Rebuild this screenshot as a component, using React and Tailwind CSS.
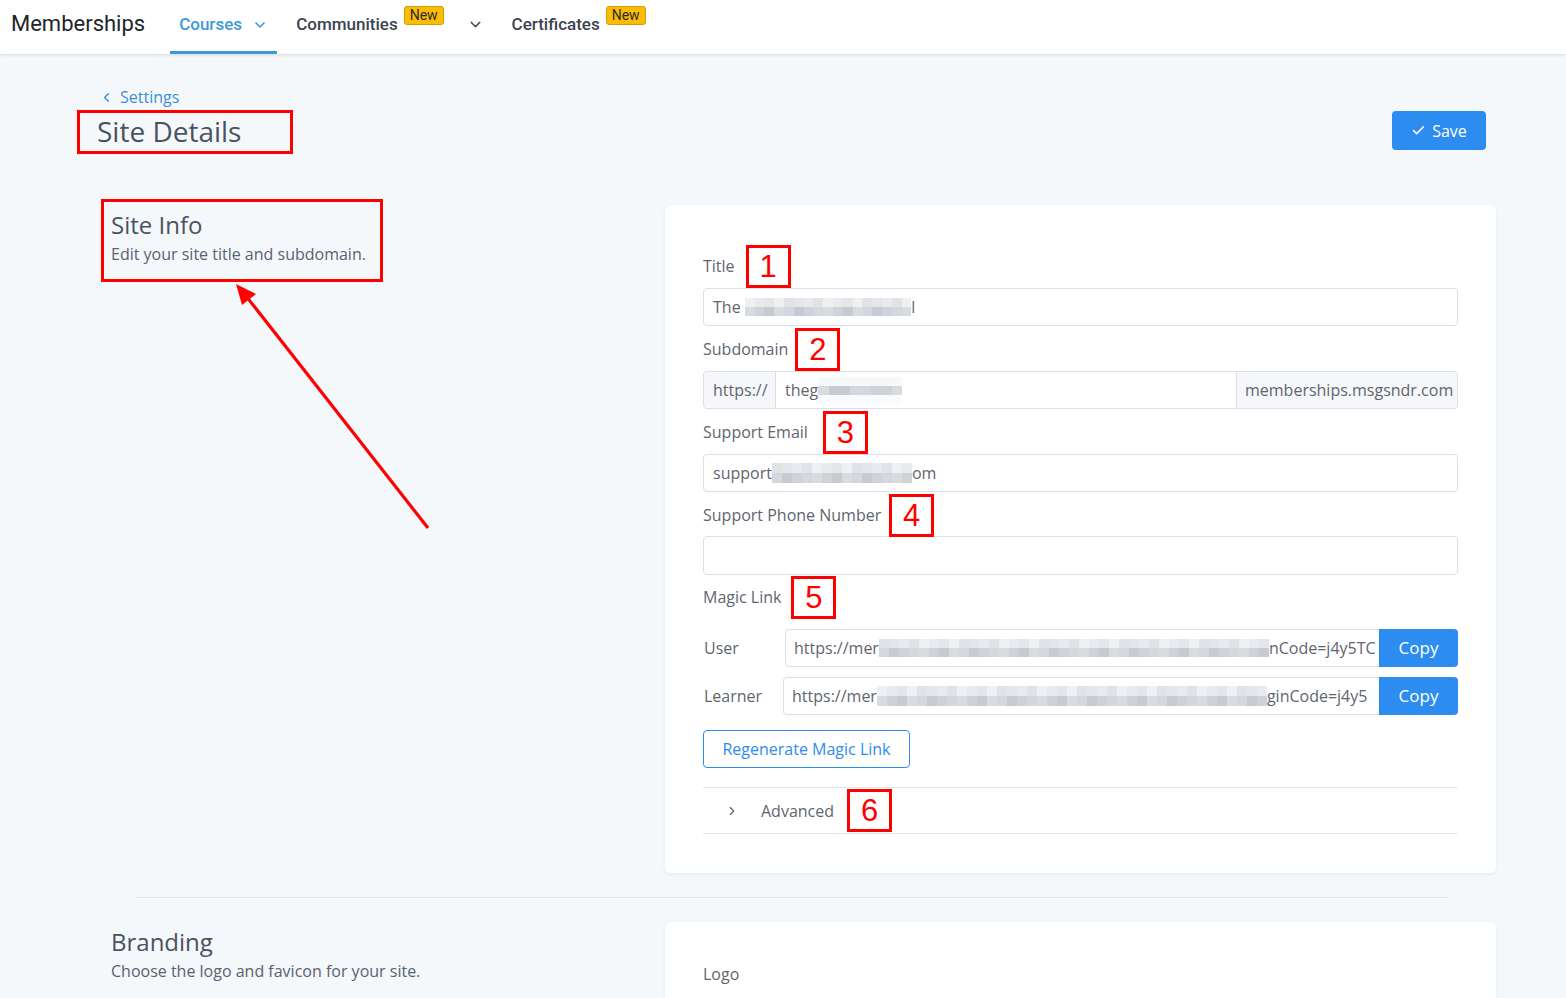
import React from "react";
import { ChevronDown, ChevronLeft, ChevronRight, Check } from "lucide-react";

const SHADES = ["#e0e2e6", "#cfd2d8", "#e8eaed", "#d8dbe0", "#eff0f2", "#c6cad1", "#e4e6e9", "#d4d7dd"];

function Mosaic({ cols, rows, seed = 0, cell = 10, rowH = 9, light = [] }) {
  const r = [];
  for (let i = 0; i < rows; i++) {
    const c = [];
    for (let j = 0; j < cols; j++) {
      const bg = light.includes(i)
        ? ["#f7f8fa", "#fafbfc", "#f4f5f7"][(i * 5 + j * 3 + seed) % 3]
        : SHADES[(i * 7 + j * 5 + seed * 3 + ((j * j + seed) % 4)) % SHADES.length];
      c.push(<div key={j} style={{ width: cell, height: rowH, background: bg }} />);
    }
    r.push(
      <div key={i} className="flex">
        {c}
      </div>
    );
  }
  return <span className="inline-flex shrink-0 flex-col align-middle">{r}</span>;
}

function NumBox({ n, className = "" }) {
  return (
    <span
      className={
        "flex h-[43px] w-[45px] shrink-0 items-center justify-center border-[3px] border-[#ff0000] bg-transparent font-['Liberation_Sans',sans-serif] text-[31px] leading-none text-[#ff0000] " +
        className
      }
    >
      {n}
    </span>
  );
}

function Label({ text, n, gap }) {
  return (
    <div className="flex h-[22px] items-center text-[16px] text-[#5f6570]">
      <span>{text}</span>
      <NumBox n={n} className={gap} />
    </div>
  );
}

function NewBadge() {
  return (
    <span className="relative -top-[9px] ml-[6px] rounded-[3px] border border-[#d39e00] bg-[#fcbc05] px-[5px] font-['Roboto',sans-serif] text-[14px] font-normal leading-[17px] text-[#2b2b2b]">
      New
    </span>
  );
}

export default function App() {
  return (
    <div className="relative min-h-[998px] w-full overflow-hidden bg-[#f5f8fb] font-['Open_Sans',sans-serif]">
      {/* Nav */}
      <nav className="flex h-[54px] items-stretch bg-white font-['Roboto',sans-serif] shadow-[0_1px_3px_rgba(0,0,0,0.12)]">
        <div className="flex items-center pb-[8px] pl-[11px] pr-[25px] text-[22px] text-[#212529]">Memberships</div>
        <div className="flex w-[107px] items-center border-b-[3px] border-[#3d9ad8] px-[9px] pb-[2px] text-[17px] font-medium text-[#3d9ad8]">
          <span>Courses</span>
          <ChevronDown className="ml-[10px] h-[16px] w-[16px]" strokeWidth={2.5} />
        </div>
        <div className="ml-[10px] flex items-center px-[9px] pb-[5px] text-[17px] font-medium text-[#3c4350]">
          <span>Communities</span>
          <NewBadge />
          <ChevronDown className="ml-[23px] h-[17px] w-[17px] text-[#4b5260]" strokeWidth={2} />
        </div>
        <div className="ml-[19px] flex items-center pb-[5px] text-[17px] font-medium text-[#3c4350]">
          <span>Certificates</span>
          <NewBadge />
        </div>
      </nav>

      {/* Page header */}
      <div className="flex items-start justify-between pl-[77px] pr-[80px] pt-[32px]">
        <div>
          <div className="flex h-[22px] items-center pl-[22px] text-[16px] text-[#3b8fd9]">
            <ChevronLeft className="mr-[6px] h-[15px] w-[15px]" strokeWidth={2.5} />
            <span>Settings</span>
          </div>
          <div className="mt-[2px] flex h-[44px] w-[216px] items-center border-[3px] border-[#ff0000] pb-[2px] pl-[17px] text-[28px] font-medium text-[#4a5262]">
            Site Details
          </div>
        </div>
        <button className="mt-[25px] flex h-[39px] w-[94px] items-center justify-center gap-[6px] rounded-[4px] bg-[#2d8cf0] text-[16px] text-white">
          <Check className="h-[15px] w-[15px]" strokeWidth={2.5} />
          Save
        </button>
      </div>

      {/* Site Info section */}
      <div className="mt-[51px] flex pl-[101px]">
        <div className="w-[564px] pt-0">
          <div className="-mt-[6px] h-[83px] w-[282px] border-[3px] border-[#ff0000] px-[7px] pt-[7px]">
            <div className="text-[24px] font-medium leading-[32px] text-[#4a5262]">Site Info</div>
            <div className="text-[16px] leading-[26px] text-[#5a6170]">Edit your site title and subdomain.</div>
          </div>
        </div>
        <div className="w-[831px] rounded-[6px] bg-white px-[38px] pb-[39px] pt-[50px] shadow-[0_1px_4px_rgba(0,0,0,0.06)]">
          <Label text="Title" n="1" gap="ml-[11px]" />
          <div className="mt-[11px] flex h-[38px] items-center overflow-hidden whitespace-nowrap rounded-[4px] border border-[#dcdfe6] px-[9px] text-[16px] text-[#5f6570]">
            <span>The&nbsp;</span>
            <Mosaic cols={17} rows={2} seed={1} cell={9.8} rowH={9} />
            <span>l</span>
          </div>

          <div className="mt-[12px]">
            <Label text="Subdomain" n="2" gap="ml-[7px]" />
          </div>
          <div className="mt-[11px] flex h-[38px] rounded-[4px] border border-[#dcdfe6] text-[16px] text-[#5f6570]">
            <div className="flex w-[72px] items-center rounded-l-[4px] border-r border-[#dcdfe6] bg-[#f5f7fa] px-[9px]">https://</div>
            <div className="flex flex-1 items-center overflow-hidden whitespace-nowrap px-[9px]">
              <span>theg</span>
              <Mosaic cols={8} rows={3} seed={3} cell={10.5} rowH={9} light={[0, 2]} />
            </div>
            <div className="flex w-[221px] items-center rounded-r-[4px] border-l border-[#dcdfe6] bg-[#f5f7fa] px-[8px]">
              memberships.msgsndr.com
            </div>
          </div>

          <div className="mt-[12px]">
            <Label text="Support Email" n="3" gap="ml-[15px]" />
          </div>
          <div className="mt-[11px] flex h-[38px] items-center whitespace-nowrap rounded-[4px] border border-[#dcdfe6] px-[9px] text-[16px] text-[#5f6570]">
            <span>support</span>
            <Mosaic cols={14} rows={2} seed={5} cell={10} rowH={10} />
            <span>om</span>
          </div>

          <div className="mt-[12px]">
            <Label text="Support Phone Number" n="4" gap="ml-[8px]" />
          </div>
          <div className="mt-[10px] h-[39px] rounded-[4px] border border-[#dcdfe6]" />

          <div className="mt-[11px]">
            <Label text="Magic Link" n="5" gap="ml-[10px]" />
          </div>

          <div className="mt-[21px] flex h-[38px] items-center text-[16px] text-[#5f6570]">
            <span className="w-[82px] pl-[1px]">User</span>
            <div className="flex h-full min-w-0 flex-1 items-center overflow-hidden whitespace-nowrap rounded-l-[4px] border border-r-0 border-[#dcdfe6] px-[8px]">
              <span>https://mer</span>
              <Mosaic cols={39} rows={2} seed={2} cell={10} rowH={9} />
              <span>nCode=j4y5TC</span>
            </div>
            <button className="h-full w-[79px] shrink-0 rounded-r-[4px] bg-[#2d8cf0] text-[17px] text-white">Copy</button>
          </div>
          <div className="mt-[10px] flex h-[38px] items-center text-[16px] text-[#5f6570]">
            <span className="w-[80px] pl-[1px]">Learner</span>
            <div className="flex h-full min-w-0 flex-1 items-center overflow-hidden whitespace-nowrap rounded-l-[4px] border border-r-0 border-[#dcdfe6] px-[8px]">
              <span>https://mer</span>
              <Mosaic cols={39} rows={2} seed={4} cell={10} rowH={10} />
              <span>ginCode=j4y5</span>
            </div>
            <button className="h-full w-[79px] shrink-0 rounded-r-[4px] bg-[#2d8cf0] text-[17px] text-white">Copy</button>
          </div>

          <button className="mt-[15px] h-[38px] w-[207px] rounded-[4px] border border-[#2d8cf0] bg-white text-[16px] text-[#2d8cf0]">
            Regenerate Magic Link
          </button>

          <div className="mt-[19px] flex h-[47px] items-center border-y border-[#e4e6ea] pl-[22px] text-[16px] text-[#5f6570]">
            <ChevronRight className="h-[14px] w-[14px] text-[#5f6570]" strokeWidth={2} />
            <span className="ml-[22px]">Advanced</span>
            <NumBox n="6" className="ml-[13px]" />
          </div>
        </div>
      </div>

      {/* divider */}
      <div className="ml-[136px] mt-[24px] h-px w-[1312px] bg-[#e3e8ee]" />

      {/* Branding section */}
      <div className="mt-[24px] flex pl-[111px]">
        <div className="w-[554px]">
          <div className="pt-[4px] text-[24px] font-medium leading-[32px] text-[#4a5262]">Branding</div>
          <div className="text-[16px] leading-[26px] text-[#5a6170]">Choose the logo and favicon for your site.</div>
        </div>
        <div className="h-[120px] w-[831px] rounded-[6px] bg-white px-[38px] pt-[40px] shadow-[0_1px_4px_rgba(0,0,0,0.06)]">
          <div className="h-[22px] text-[16px] text-[#5f6570]">Logo</div>
        </div>
      </div>

      {/* annotation arrow */}
      <svg className="pointer-events-none absolute left-0 top-0" width="1566" height="998">
        <line x1="428" y1="528" x2="246" y2="296" stroke="#ff0000" strokeWidth="3.2" />
        <polygon points="236,284 256,294 242,305" fill="#ff0000" />
      </svg>
    </div>
  );
}
